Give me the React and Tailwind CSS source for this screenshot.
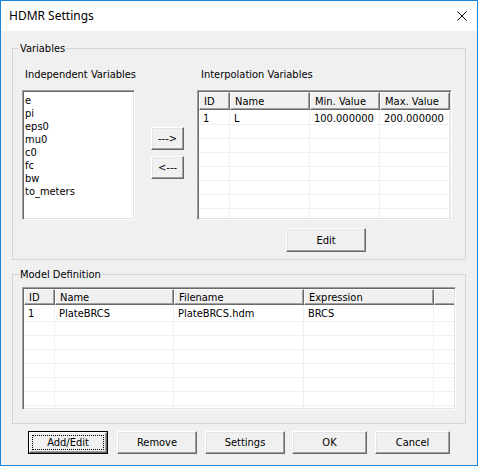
import React from "react";

const sunken =
  "border border-t-[#a0a0a0] border-l-[#a0a0a0] border-b-white border-r-white shadow-[inset_1px_1px_0_#696969,inset_-1px_-1px_0_#e3e3e3] p-[1px]";

function Button({ children, className = "", isDefault = false }) {
  if (isDefault) {
    return (
      <div className={"border border-black " + className}>
        <div className="h-full w-full border border-t-white border-l-white border-b-[#696969] border-r-[#696969] shadow-[inset_-1px_-1px_0_#a0a0a0] bg-[#f0f0f0] p-[2px]">
          <div className="h-full w-full border border-dotted border-black flex items-center justify-center leading-[13px]">
            {children}
          </div>
        </div>
      </div>
    );
  }
  return (
    <div
      className={
        "border border-t-white border-l-white border-b-[#696969] border-r-[#696969] shadow-[inset_-1px_-1px_0_#a0a0a0,inset_1px_1px_0_#e3e3e3] bg-[#f0f0f0] flex items-center justify-center leading-[13px] " +
        className
      }
    >
      {children}
    </div>
  );
}

function Group({ label, className = "", children }) {
  return (
    <div className={"relative border border-[#d5d5d5] " + className}>
      <span className="absolute -top-[7px] left-[6px] px-[1px] bg-[#f0f0f0] leading-[13px]">
        {label}
      </span>
      {children}
    </div>
  );
}

function HeaderCell({ w, children, last = false }) {
  return (
    <div
      className={
        "h-full shrink-0 border-t border-l border-t-white border-l-white border-b border-b-[#696969] bg-[#f0f0f0] pl-[4px] flex items-center leading-[13px] " +
        (last
          ? "grow shadow-[inset_0_-1px_0_#a0a0a0]"
          : "border-r border-r-[#696969] shadow-[inset_-1px_-1px_0_#a0a0a0]")
      }
      style={w ? { width: w } : undefined}
    >
      {children}
    </div>
  );
}

function Table({ cols, rows, headerH, firstRowH, rowCount, lastBlank, firstPad }) {
  const bodyRows = [];
  for (let i = 0; i < rowCount; i++) {
    const r = rows[i] || [];
    bodyRows.push(
      <div
        key={i}
        className="flex shrink-0 border-b border-b-[#f0f0f0]"
        style={{ height: i === 0 ? firstRowH : 14 }}
      >
        {cols.map((c, j) => (
          <div
            key={j}
            className="shrink-0 border-r border-r-[#f0f0f0] pl-[4px] flex items-center leading-[13px] whitespace-nowrap"
            style={{ width: c.w, paddingTop: i === 0 ? firstPad : 0 }}
          >
            {r[j] || ""}
          </div>
        ))}
        {lastBlank && <div className="grow" />}
      </div>
    );
  }
  return (
    <div className="h-full w-full bg-white overflow-hidden flex flex-col">
      <div className="flex shrink-0" style={{ height: headerH }}>
        {cols.map((c, j) => (
          <HeaderCell key={j} w={c.w}>
            {c.label}
          </HeaderCell>
        ))}
        {lastBlank && <HeaderCell last />}
      </div>
      {bodyRows}
    </div>
  );
}

export default function App() {
  const vars = ["e", "pi", "eps0", "mu0", "c0", "fc", "bw", "to_meters"];
  return (
    <div className="w-[478px] h-[466px] border border-[#1c84d6] bg-[#f0f0f0] flex flex-col text-[11px] text-black font-['DejaVu_Sans_Condensed','Liberation_Sans',sans-serif] overflow-hidden">
      {/* Title bar */}
      <div className="h-[30px] shrink-0 bg-white flex items-center justify-between pl-[8px] pr-[9px]">
        <span className="text-[12px] font-['Noto_Sans','Open_Sans',sans-serif] leading-[16px]">
          HDMR Settings
        </span>
        <svg width="10" height="10" viewBox="0 0 10 10" className="mr-[1px]">
          <path d="M0.5 0.5 L9.5 9.5 M9.5 0.5 L0.5 9.5" stroke="#000" strokeWidth="1" fill="none" />
        </svg>
      </div>

      {/* Body */}
      <div className="pl-[11px] pt-[17px]">
        <Group label="Variables" className="w-[454px] h-[212px]">
          <div className="flex">
            {/* Left column */}
            <div className="ml-[9px] pt-[19px] flex flex-col">
              <div className="h-[13px] leading-[13px] pl-[3px]">Independent Variables</div>
              <div className={"mt-[9px] w-[113px] h-[130px] " + sunken}>
                <div className="h-full w-full bg-white pl-[1px] pt-[2px]">
                  {vars.map((v) => (
                    <div key={v} className="h-[13px] leading-[13px]">
                      {v}
                    </div>
                  ))}
                </div>
              </div>
            </div>
            {/* Middle buttons */}
            <div className="ml-[15px] pt-[78px] flex flex-col gap-[6px]">
              <Button className="w-[33px] h-[23px]">---&gt;</Button>
              <Button className="w-[33px] h-[23px]">&lt;---</Button>
            </div>
            {/* Right column */}
            <div className="ml-[13px] pt-[19px] flex flex-col">
              <div className="h-[13px] leading-[13px] pl-[4px]">Interpolation Variables</div>
              <div className={"mt-[9px] w-[255px] h-[130px] " + sunken}>
                <Table
                  headerH={18}
                  firstRowH={15}
                  firstPad={2}
                  rowCount={9}
                  cols={[
                    { w: 31, label: "ID" },
                    { w: 80, label: "Name" },
                    { w: 70, label: "Min. Value" },
                    { w: 70, label: "Max. Value" },
                  ]}
                  rows={[["1", "L", "100.000000", "200.000000"]]}
                />
              </div>
              <Button className="mt-[8px] ml-[89px] w-[80px] h-[24px]">Edit</Button>
            </div>
          </div>
        </Group>

        <Group label="Model Definition" className="mt-[14px] w-[454px] h-[150px]">
          <div className={"mt-[12px] ml-[9px] w-[434px] h-[123px] " + sunken}>
            <Table
              headerH={16}
              firstRowH={17}
              firstPad={1}
              rowCount={8}
              lastBlank
              cols={[
                { w: 31, label: "ID" },
                { w: 119, label: "Name" },
                { w: 130, label: "Filename" },
                { w: 130, label: "Expression" },
              ]}
              rows={[["1", "PlateBRCS", "PlateBRCS.hdm", "BRCS"]]}
            />
          </div>
        </Group>

        <div className="flex mt-[7px] ml-[16px]">
          <Button isDefault className="w-[80px] h-[23px]">Add/Edit</Button>
          <Button className="ml-[9px] w-[80px] h-[23px]">Remove</Button>
          <Button className="ml-[8px] w-[80px] h-[23px]">Settings</Button>
          <Button className="ml-[7px] w-[75px] h-[23px]">OK</Button>
          <Button className="ml-[8px] w-[75px] h-[23px]">Cancel</Button>
        </div>
      </div>
    </div>
  );
}
